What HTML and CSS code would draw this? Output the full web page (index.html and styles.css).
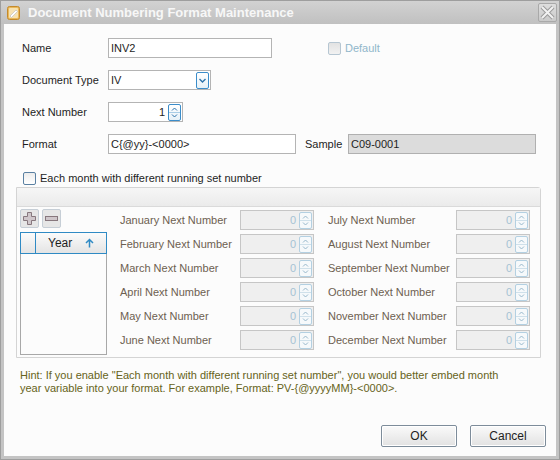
FILE: index.html
```
<!DOCTYPE html>
<html lang="en">

<head>
    <meta charset="UTF-8">
    <title>Document Numbering Format Maintenance</title>
    <link rel="stylesheet" href="styles.css">
</head>

<body>

    <div class="window">
        <div class="titlebar">
            <svg class="app-icon" width="13" height="14" viewBox="0 0 13 14">
                <rect x="0.5" y="0.5" width="12" height="13" rx="2" fill="#e9b85a" stroke="#c48a2c"/>
                <rect x="2" y="2" width="9" height="10" rx="1" fill="#f7e2b0"/>
                <path d="M3 10 L9 4 L10.5 5.5 L4.5 11.5 Z" fill="#ffffff" stroke="#b9b9b9" stroke-width="0.6"/>
            </svg>
            <span class="title">Document Numbering Format Maintenance</span>
            <span class="close">
                <svg width="17" height="17" viewBox="0 0 17 17">
                    <path d="M3 3 L14 14 M14 3 L3 14" stroke="#9c9c9c" stroke-width="4"/>
                    <path d="M3 3 L14 14 M14 3 L3 14" stroke="#f2f2f2" stroke-width="2"/>
                </svg>
            </span>
        </div>

        <div class="content">
            <div class="row">
                <span class="label">Name</span>
                <span class="field name">INV2</span>
                <span class="check default-check disabled"></span>
                <span class="check-text disabled-text">Default</span>
            </div>

            <div class="row">
                <span class="label">Document Type</span>
                <span class="field doctype">
                    <span class="value">IV</span>
                    <span class="btn-small">
                        <svg width="11" height="15" viewBox="0 0 11 15"><polyline points="2.5,6 5.5,9 8.5,6" fill="none" stroke="currentColor" stroke-width="1.4"/></svg>
                    </span>
                </span>
            </div>

            <div class="row">
                <span class="label">Next Number</span>
                <span class="field number">
                    <span class="value right">1</span>
                    <span class="btn-small spin">
                        <svg width="11" height="15" viewBox="0 0 11 15"><polyline points="3,5.5 5.5,3 8,5.5" fill="none" stroke="currentColor"/><line x1="0" y1="7.5" x2="11" y2="7.5" stroke="#a8cde6"/><polyline points="3,9.5 5.5,12 8,9.5" fill="none" stroke="currentColor"/></svg>
                    </span>
                </span>
            </div>

            <div class="row">
                <span class="label">Format</span>
                <span class="field format">C{@yy}-&lt;0000&gt;</span>
                <span class="sample-label">Sample</span>
                <span class="field sample">C09-0001</span>
            </div>

            <div class="check-row">
                <span class="check"></span>
                <span class="check-text">Each month with different running set number</span>
            </div>

            <section class="group">
                <div class="group-head"></div>
                <div class="group-body">
                    <div class="side">
                        <div class="tool-buttons">
                            <span class="tool">
                                <svg width="15" height="15" viewBox="0 0 15 15"><path d="M5.5 1.5 H9.5 V5.5 H13.5 V9.5 H9.5 V13.5 H5.5 V9.5 H1.5 V5.5 H5.5 Z" fill="#cfc6ca" stroke="#87777d"/></svg>
                            </span>
                            <span class="tool">
                                <svg width="15" height="15" viewBox="0 0 15 15"><rect x="1.5" y="5.5" width="12" height="4" fill="#cfc6ca" stroke="#87777d"/></svg>
                            </span>
                        </div>
                        <div class="year-grid">
                            <div class="grid-head">
                                <span class="grid-cell indicator"></span>
                                <span class="grid-cell year">Year
                                    <svg class="sort" width="9" height="10" viewBox="0 0 9 10"><path d="M1 5 L4.5 1.5 L8 5 M4.5 1.5 V9.5" fill="none" stroke="#2f8ac4" stroke-width="1.5"/></svg>
                                </span>
                            </div>
                        </div>
                    </div>

                    <div class="months">
                        <span class="month">January Next Number</span>
                        <span class="field month-field"><span class="value right">0</span><span class="btn-small spin off"><svg width="11" height="15" viewBox="0 0 11 15"><polyline points="3,5.5 5.5,3 8,5.5" fill="none" stroke="currentColor"/><line x1="0" y1="7.5" x2="11" y2="7.5" stroke="#cfe0ea"/><polyline points="3,9.5 5.5,12 8,9.5" fill="none" stroke="currentColor"/></svg></span></span>
                        <span class="month">July Next Number</span>
                        <span class="field month-field"><span class="value right">0</span><span class="btn-small spin off"><svg width="11" height="15" viewBox="0 0 11 15"><polyline points="3,5.5 5.5,3 8,5.5" fill="none" stroke="currentColor"/><line x1="0" y1="7.5" x2="11" y2="7.5" stroke="#cfe0ea"/><polyline points="3,9.5 5.5,12 8,9.5" fill="none" stroke="currentColor"/></svg></span></span>

                        <span class="month">February Next Number</span>
                        <span class="field month-field"><span class="value right">0</span><span class="btn-small spin off"><svg width="11" height="15" viewBox="0 0 11 15"><polyline points="3,5.5 5.5,3 8,5.5" fill="none" stroke="currentColor"/><line x1="0" y1="7.5" x2="11" y2="7.5" stroke="#cfe0ea"/><polyline points="3,9.5 5.5,12 8,9.5" fill="none" stroke="currentColor"/></svg></span></span>
                        <span class="month">August Next Number</span>
                        <span class="field month-field"><span class="value right">0</span><span class="btn-small spin off"><svg width="11" height="15" viewBox="0 0 11 15"><polyline points="3,5.5 5.5,3 8,5.5" fill="none" stroke="currentColor"/><line x1="0" y1="7.5" x2="11" y2="7.5" stroke="#cfe0ea"/><polyline points="3,9.5 5.5,12 8,9.5" fill="none" stroke="currentColor"/></svg></span></span>

                        <span class="month">March Next Number</span>
                        <span class="field month-field"><span class="value right">0</span><span class="btn-small spin off"><svg width="11" height="15" viewBox="0 0 11 15"><polyline points="3,5.5 5.5,3 8,5.5" fill="none" stroke="currentColor"/><line x1="0" y1="7.5" x2="11" y2="7.5" stroke="#cfe0ea"/><polyline points="3,9.5 5.5,12 8,9.5" fill="none" stroke="currentColor"/></svg></span></span>
                        <span class="month">September Next Number</span>
                        <span class="field month-field"><span class="value right">0</span><span class="btn-small spin off"><svg width="11" height="15" viewBox="0 0 11 15"><polyline points="3,5.5 5.5,3 8,5.5" fill="none" stroke="currentColor"/><line x1="0" y1="7.5" x2="11" y2="7.5" stroke="#cfe0ea"/><polyline points="3,9.5 5.5,12 8,9.5" fill="none" stroke="currentColor"/></svg></span></span>

                        <span class="month">April Next Number</span>
                        <span class="field month-field"><span class="value right">0</span><span class="btn-small spin off"><svg width="11" height="15" viewBox="0 0 11 15"><polyline points="3,5.5 5.5,3 8,5.5" fill="none" stroke="currentColor"/><line x1="0" y1="7.5" x2="11" y2="7.5" stroke="#cfe0ea"/><polyline points="3,9.5 5.5,12 8,9.5" fill="none" stroke="currentColor"/></svg></span></span>
                        <span class="month">October Next Number</span>
                        <span class="field month-field"><span class="value right">0</span><span class="btn-small spin off"><svg width="11" height="15" viewBox="0 0 11 15"><polyline points="3,5.5 5.5,3 8,5.5" fill="none" stroke="currentColor"/><line x1="0" y1="7.5" x2="11" y2="7.5" stroke="#cfe0ea"/><polyline points="3,9.5 5.5,12 8,9.5" fill="none" stroke="currentColor"/></svg></span></span>

                        <span class="month">May Next Number</span>
                        <span class="field month-field"><span class="value right">0</span><span class="btn-small spin off"><svg width="11" height="15" viewBox="0 0 11 15"><polyline points="3,5.5 5.5,3 8,5.5" fill="none" stroke="currentColor"/><line x1="0" y1="7.5" x2="11" y2="7.5" stroke="#cfe0ea"/><polyline points="3,9.5 5.5,12 8,9.5" fill="none" stroke="currentColor"/></svg></span></span>
                        <span class="month">November Next Number</span>
                        <span class="field month-field"><span class="value right">0</span><span class="btn-small spin off"><svg width="11" height="15" viewBox="0 0 11 15"><polyline points="3,5.5 5.5,3 8,5.5" fill="none" stroke="currentColor"/><line x1="0" y1="7.5" x2="11" y2="7.5" stroke="#cfe0ea"/><polyline points="3,9.5 5.5,12 8,9.5" fill="none" stroke="currentColor"/></svg></span></span>

                        <span class="month">June Next Number</span>
                        <span class="field month-field"><span class="value right">0</span><span class="btn-small spin off"><svg width="11" height="15" viewBox="0 0 11 15"><polyline points="3,5.5 5.5,3 8,5.5" fill="none" stroke="currentColor"/><line x1="0" y1="7.5" x2="11" y2="7.5" stroke="#cfe0ea"/><polyline points="3,9.5 5.5,12 8,9.5" fill="none" stroke="currentColor"/></svg></span></span>
                        <span class="month">December Next Number</span>
                        <span class="field month-field"><span class="value right">0</span><span class="btn-small spin off"><svg width="11" height="15" viewBox="0 0 11 15"><polyline points="3,5.5 5.5,3 8,5.5" fill="none" stroke="currentColor"/><line x1="0" y1="7.5" x2="11" y2="7.5" stroke="#cfe0ea"/><polyline points="3,9.5 5.5,12 8,9.5" fill="none" stroke="currentColor"/></svg></span></span>
                    </div>
                </div>
            </section>

            <p class="hint">Hint: If you enable "Each month with different running set number", you would better embed month year variable into your format. For example, Format: PV-{@yyyyMM}-&lt;0000&gt;.</p>

            <footer class="buttons">
                <button class="dlg-button ok">OK</button>
                <button class="dlg-button cancel">Cancel</button>
            </footer>
        </div>
    </div>

</body>

</html>
```

FILE: styles.css
```
body {
    margin: 0;
    font-family: "Liberation Sans", Arial, sans-serif;
    font-size: 11px;
    color: #1e1e1e;
}

.window {
    width: 560px;
    height: 460px;
    box-sizing: border-box;
    border: 1px solid #9e9e9e;
    background-color: #c4c4c4;
    display: flex;
    flex-direction: column;
}

/* title bar */
.titlebar {
    height: 23px;
    display: flex;
    align-items: center;
    padding-left: 6px;
    padding-right: 2px;
    background-image: linear-gradient(#d2d2d2, #c0c0c0);
}

.app-icon {
    margin-right: 8px;
}

.title {
    flex: 1;
    font-size: 13px;
    font-weight: bold;
    color: #f7f7f7;
}

.close {
    width: 17px;
    height: 17px;
    border: 1px solid #a9a9a9;
    border-radius: 2px;
    background-image: linear-gradient(#dedede, #cacaca);
    display: flex;
}

/* content */
.content {
    flex: 1;
    margin: 0 3px 3px 3px;
    padding: 14px 10px 9px 12px;
    background-color: #fcfcfc;
    display: flex;
    flex-direction: column;
}

.row {
    height: 20px;
    margin-left: 6px;
    margin-bottom: 12px;
    display: flex;
    align-items: center;
}

.label {
    width: 86px;
}

.field {
    height: 20px;
    box-sizing: border-box;
    border: 1px solid #b4b4b4;
    background-color: #ffffff;
    padding: 0 2px;
    display: flex;
    align-items: center;
}

.field .value {
    flex: 1;
}

.field .right {
    text-align: right;
    padding-right: 3px;
}

.name { width: 164px; }
.doctype { width: 103px; padding-right: 1px; }
.number { width: 75px; padding-right: 1px; }
.format { width: 188px; }

.sample-label {
    margin-left: 9px;
    width: 43px;
}

.sample {
    width: 188px;
    background-color: #dcdcdc;
    border-color: #b0b0b0;
}

.btn-small {
    width: 11px;
    height: 15px;
    border: 1px solid #3b8dca;
    border-radius: 2px;
    background-image: linear-gradient(#ffffff, #e6f1f8);
    color: #2d73ab;
    display: flex;
}

.spin.off {
    border-color: #b3d0e2;
    background-image: none;
    background-color: #f6f9fb;
    color: #98b8cc;
}

/* checkboxes */
.check {
    width: 11px;
    height: 11px;
    border: 1px solid #5a80a2;
    border-radius: 2px;
    background-image: linear-gradient(#ececec, #ffffff);
    margin-right: 4px;
}

.check.disabled {
    border-color: #b6c6d2;
    background-image: linear-gradient(#e2e2e2, #f2f2f2);
}

.default-check {
    margin-left: 56px;
}

.disabled-text {
    color: #90b6ca;
}

.check-row {
    height: 14px;
    margin: 5px 0 0 7px;
    display: flex;
    align-items: center;
}

/* month group */
.group {
    width: 525px;
    height: 171px;
    box-sizing: border-box;
    margin-top: 2px;
    border: 1px solid #d4d4d4;
    border-radius: 0 3px 0 0;
}

.group-head {
    height: 18px;
    border-bottom: 1px solid #dadada;
    background-image: linear-gradient(#f6f6f6, #ebebeb);
}

.group-body {
    display: flex;
    padding: 2px 0 0 3px;
}

.side {
    width: 88px;
}

.tool-buttons {
    display: flex;
    gap: 3px;
}

.tool {
    width: 17px;
    height: 17px;
    border: 1px solid #c6ced6;
    border-radius: 2px;
    background-color: #e6e6e6;
    display: flex;
    align-items: center;
    justify-content: center;
}

.year-grid {
    width: 87px;
    height: 123px;
    box-sizing: border-box;
    margin-top: 4px;
    border: 1px solid #a8a8a8;
}

.grid-head {
    height: 22px;
    margin: -1px -1px 0 -1px;
    display: flex;
}

.grid-cell {
    box-sizing: border-box;
    border: 1px solid #2f8ac4;
    background-image: linear-gradient(#fbfbfb, #e4e4e4);
    display: flex;
    align-items: center;
}

.indicator {
    width: 16px;
}

.year {
    flex: 1;
    border-left: 0;
    padding-left: 12px;
    font-size: 12px;
}

.sort {
    margin-left: 13px;
}

.months {
    margin: 1px 0 0 12px;
    display: grid;
    grid-template-columns: 120px 88px 128px 74px;
    grid-auto-rows: 20px;
    row-gap: 4px;
}

.month {
    color: #6d6050;
    display: flex;
    align-items: center;
}

.month-field {
    width: 74px;
    background-color: #efefef;
    border-color: #c6c6c6;
    color: #a6c3d4;
    padding-right: 1px;
}

/* hint and buttons */
.hint {
    max-width: 490px;
    margin: 11px 0 0 4px;
    line-height: 13px;
    color: #666320;
}

.buttons {
    margin-top: auto;
    display: flex;
    justify-content: flex-end;
    gap: 13px;
}

.dlg-button {
    height: 22px;
    width: 76px;
    font-family: "Liberation Sans", Arial, sans-serif;
    font-size: 12px;
    color: #1e1e1e;
    border: 1px solid #7d8c9a;
    border-radius: 2px;
    background-image: linear-gradient(#fafafa, #e2e2e2);
    box-shadow: inset 0 0 0 1px #ffffff;
}
```
